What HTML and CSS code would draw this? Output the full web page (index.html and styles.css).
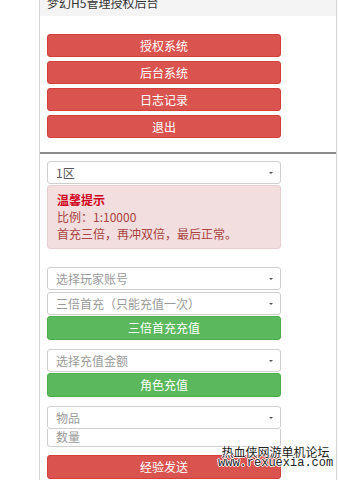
FILE: index.html
```html
<!DOCTYPE html>
<html>
<head>
<meta charset="utf-8">
<link rel="stylesheet" href="styles.css">
</head>
<body>
<div class="page">
  <div class="panel panel-top">
    <div class="panel-heading">梦幻H5管理授权后台</div>
    <div class="panel-body menu">
      <a class="btn btn-red">授权系统</a>
      <a class="btn btn-red">后台系统</a>
      <a class="btn btn-red">日志记录</a>
      <a class="btn btn-red">退出</a>
    </div>
  </div>
  <div class="panel panel-main">
    <div class="select sel-zone"><span class="val">1区</span><i class="caret"></i></div>
    <div class="alert">
      <div class="alert-title">温馨提示</div>
      <div>比例：1:10000</div>
      <div>首充三倍，再冲双倍，最后正常。</div>
    </div>
    <div class="group g-first">
      <div class="select"><span class="ph">选择玩家账号</span><i class="caret"></i></div>
      <div class="select"><span class="ph">三倍首充（只能充值一次）</span><i class="caret"></i></div>
      <a class="btn btn-green">三倍首充充值</a>
    </div>
    <div class="group">
      <div class="select"><span class="ph">选择充值金额</span><i class="caret"></i></div>
      <a class="btn btn-green">角色充值</a>
    </div>
    <div class="group">
      <div class="select"><span class="ph">物品</span><i class="caret"></i></div>
      <div class="input"><span class="ph">数量</span></div>
      <a class="btn btn-red btn-send">经验发送</a>
    </div>
  </div>
  <div class="watermark">
    <div class="wm-cn">热血侠网游单机论坛</div>
    <div class="wm-en">www.rexuexia.com</div>
  </div>
</div>
</body>
</html>
```

FILE: styles.css
```css
html, body {
  margin: 0;
  padding: 0;
  background: #fff;
  overflow: hidden;
}
body {
  font-family: "Noto Sans CJK SC", "Liberation Sans", sans-serif;
  font-size: 12px;
  color: #333;
}
.page {
  position: relative;
  width: 298px;
  margin: -8px 0 0 39px;
  height: 488px;
}
.panel {
  border-left: 1px solid #d4d4d4;
  border-right: 1px solid #d4d4d4;
  background: #fff;
}
.panel-heading {
  height: 24px;
  line-height: 22px;
  background: #f4f4f4;
  padding-left: 7px;
  color: #333;
  font-size: 12px;
}
.menu {
  background: #fff;
  padding: 18px 0 14px 7px;
  display: flex;
  flex-direction: column;
  gap: 4px;
  border-bottom: 2px solid #8c8c8c;
}
.btn {
  display: block;
  width: 234px;
  height: 23px;
  line-height: 23px;
  border-radius: 3px;
  text-align: center;
  color: #fff;
  font-size: 12px;
  box-sizing: border-box;
}
.btn-red {
  background: #d9534f;
  border: 1px solid #d43f3a;
  line-height: 21px;
}
.btn-green {
  background: #5cb85c;
  border: 1px solid #4cae4c;
  line-height: 22px;
  height: 24px;
}
.panel-main {
  padding: 7px 0 0 7px;
  height: 340px;
}
.select, .input {
  position: relative;
  width: 234px;
  height: 23px;
  line-height: 21px;
  border: 1px solid #cfcfcf;
  border-radius: 3px;
  box-sizing: border-box;
  padding-left: 8px;
  background: #fff;
  color: #555;
}
.ph { color: #9a9a9a; }
.caret {
  position: absolute;
  right: 7px;
  top: 10px;
  width: 0;
  height: 0;
  border-left: 2px solid transparent;
  border-right: 2px solid transparent;
  border-top: 2px solid #555;
}
.alert {
  margin-top: 1px;
  width: 234px;
  box-sizing: border-box;
  background: #f2dede;
  border: 1px solid #ebccd1;
  border-radius: 3px;
  padding: 5px 9px 6px;
  color: #a94442;
  line-height: 17px;
  font-size: 12px;
}
.alert-title {
  font-weight: bold;
  color: #d0021b;
}
.group {
  display: flex;
  flex-direction: column;
  margin-top: 9px;
}
.g-first { margin-top: 18px; }
.group .select + .select { margin-top: 2px; }
.group .select + .btn { margin-top: 1px; }
.group .input {
  height: 18px;
  line-height: 16px;
  border-top: none;
  border-radius: 0 0 3px 3px;
}
.btn-send { margin-top: 8px; height: 24px; line-height: 22px; }
.watermark {
  position: absolute;
  left: 179px;
  top: 453px;
  text-align: center;
  color: #222;
  text-shadow: 1px 0 0 #fff, -1px 0 0 #fff, 0 1px 0 #fff, 0 -1px 0 #fff;
}
.wm-cn {
  font-family: "Noto Sans CJK SC", sans-serif;
  font-size: 12px;
  line-height: 13px;
}
.wm-en {
  font-family: "Liberation Mono", monospace;
  font-size: 12px;
  line-height: 11px;
}
```
